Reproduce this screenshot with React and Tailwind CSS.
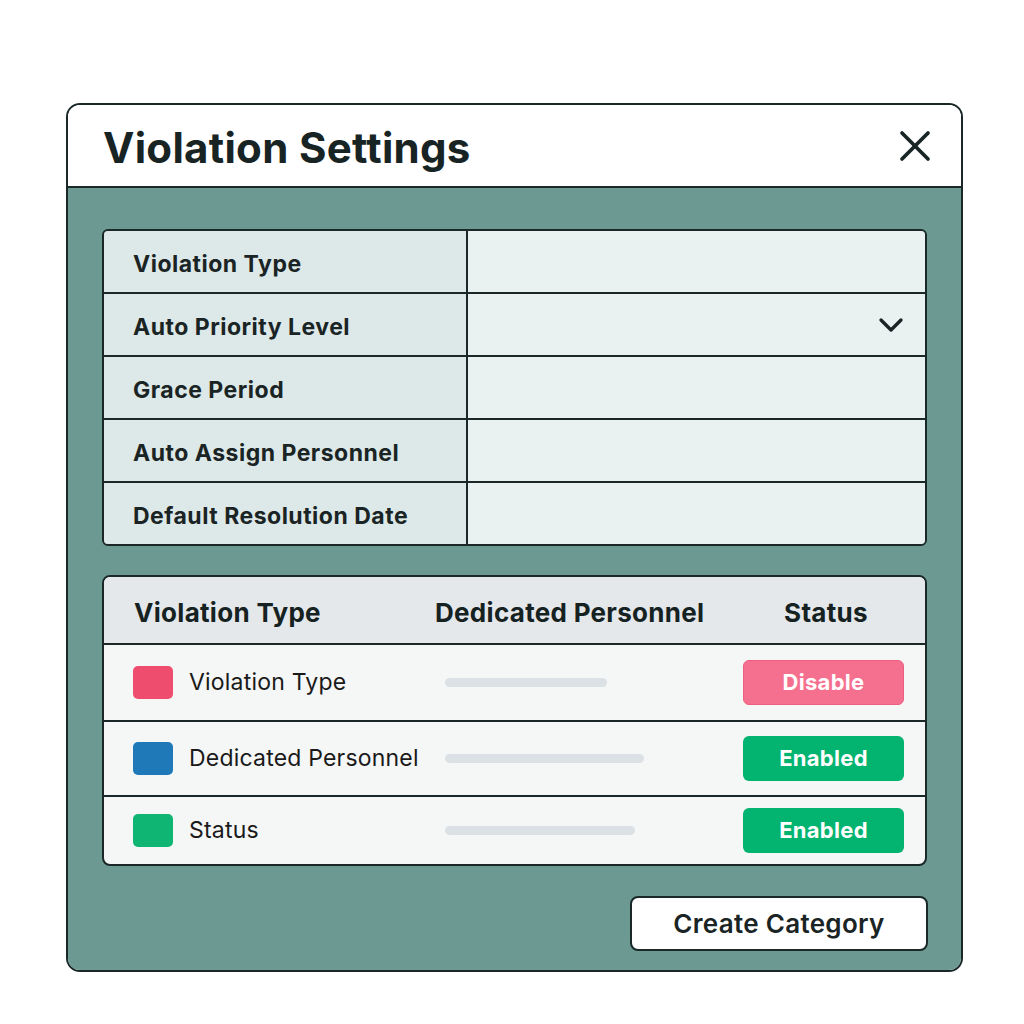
import { X, ChevronDown } from "lucide-react";

const fields = [
    "Violation Type",
    "Auto Priority Level",
    "Grace Period",
    "Auto Assign Personnel",
    "Default Resolution Date",
];

const rows = [
    { name: "Violation Type", color: "bg-[#ef4d6e]", bar: "w-[162px]", status: "Disable", h: "h-[75px]" },
    { name: "Dedicated Personnel", color: "bg-[#1f78b8]", bar: "w-[199px]", status: "Enabled", h: "h-[75px]" },
    { name: "Status", color: "bg-[#0fb573]", bar: "w-[190px]", status: "Enabled", h: "h-[69px]" },
];

function App() {
    return (
        <div
            className="min-h-screen bg-white pt-[103px] pl-[66px]"
            style={{ fontFamily: "Inter, 'Noto Sans', sans-serif" }}
        >
            <div className="w-[897px] border-2 border-[#1b2828] rounded-[14px] overflow-hidden">
                {/* header */}
                <div className="h-[83px] bg-white border-b-2 border-[#1b2828] flex items-center justify-between pl-[35px] pr-[20px]">
                    <h1 className="text-[42px] font-bold text-[#182424] tracking-[0.3px] mt-[4px]">
                        Violation Settings
                    </h1>
                    <X className="w-[52px] h-[52px] text-[#182424]" strokeWidth={1.7} />
                </div>

                {/* body */}
                <div className="bg-[#6c9a92] px-[34px] pt-[41px] pb-[19px]">
                    {/* settings form */}
                    <div className="border-2 border-[#1b2828] rounded-[6px] overflow-hidden">
                        {fields.map((f, i) => (
                            <div
                                key={f}
                                className={`flex h-[61px] ${i > 0 ? "border-t-2 border-[#1b2828] h-[63px]" : ""}`}
                            >
                                <div className="w-[364px] bg-[#dce9e8] border-r-2 border-[#1b2828] flex items-center pl-[29px] pt-[5px]">
                                    <span className="text-[23px] font-bold tracking-[0.5px] text-[#1a2424]">{f}</span>
                                </div>
                                <div className="flex-1 bg-[#e9f1f1] flex items-center justify-end pr-[14px]">
                                    {i === 1 && (
                                        <ChevronDown className="w-[40px] h-[40px] text-[#1a2424]" strokeWidth={2} />
                                    )}
                                </div>
                            </div>
                        ))}
                    </div>

                    {/* category table */}
                    <div className="mt-[29px] border-2 border-[#1b2828] rounded-[8px] overflow-hidden bg-[#f5f6f6]">
                        <div className="h-[68px] bg-[#e4e8eb] border-b-2 border-[#1b2828] flex items-center pt-[4px] text-[26px] font-bold tracking-[0.3px] text-[#162222]">
                            <div className="w-[331px] pl-[30px]">Violation Type</div>
                            <div className="w-[300px]">Dedicated Personnel</div>
                            <div className="flex-1 text-center pr-[8px]">Status</div>
                        </div>
                        {rows.map((r, i) => (
                            <div
                                key={r.name}
                                className={`flex items-center ${r.h} ${i > 0 ? "border-t-2 border-[#1b2828]" : ""}`}
                            >
                                <div className="w-[341px] pl-[29px] flex items-center gap-[16px]">
                                    <span className={`w-[40px] h-[33px] rounded-[5px] ${r.color}`} />
                                    <span className="text-[23px] tracking-[0.2px] text-[#1a1a1a]">{r.name}</span>
                                </div>
                                <div className="flex-1">
                                    <div className={`h-[9px] rounded-full bg-[#dbe1e4] ${r.bar}`} />
                                </div>
                                <div
                                    className={`mr-[21px] w-[161px] h-[45px] rounded-[6px] flex items-center justify-center text-[22px] font-bold text-white tracking-[0.3px] ${
                                        r.status === "Disable" ? "bg-[#f56f8e] border border-[#ec5f80]" : "bg-[#03b370]"
                                    }`}
                                >
                                    {r.status}
                                </div>
                            </div>
                        ))}
                    </div>

                    <div className="flex justify-end mt-[30px]">
                        <button className="w-[298px] h-[55px] bg-white border-2 border-[#1b2828] rounded-[8px] text-[26px] font-semibold tracking-[0.3px] text-[#1a2424] mr-[-1px]">
                            Create Category
                        </button>
                    </div>
                </div>
            </div>
        </div>
    );
}

export default App;
